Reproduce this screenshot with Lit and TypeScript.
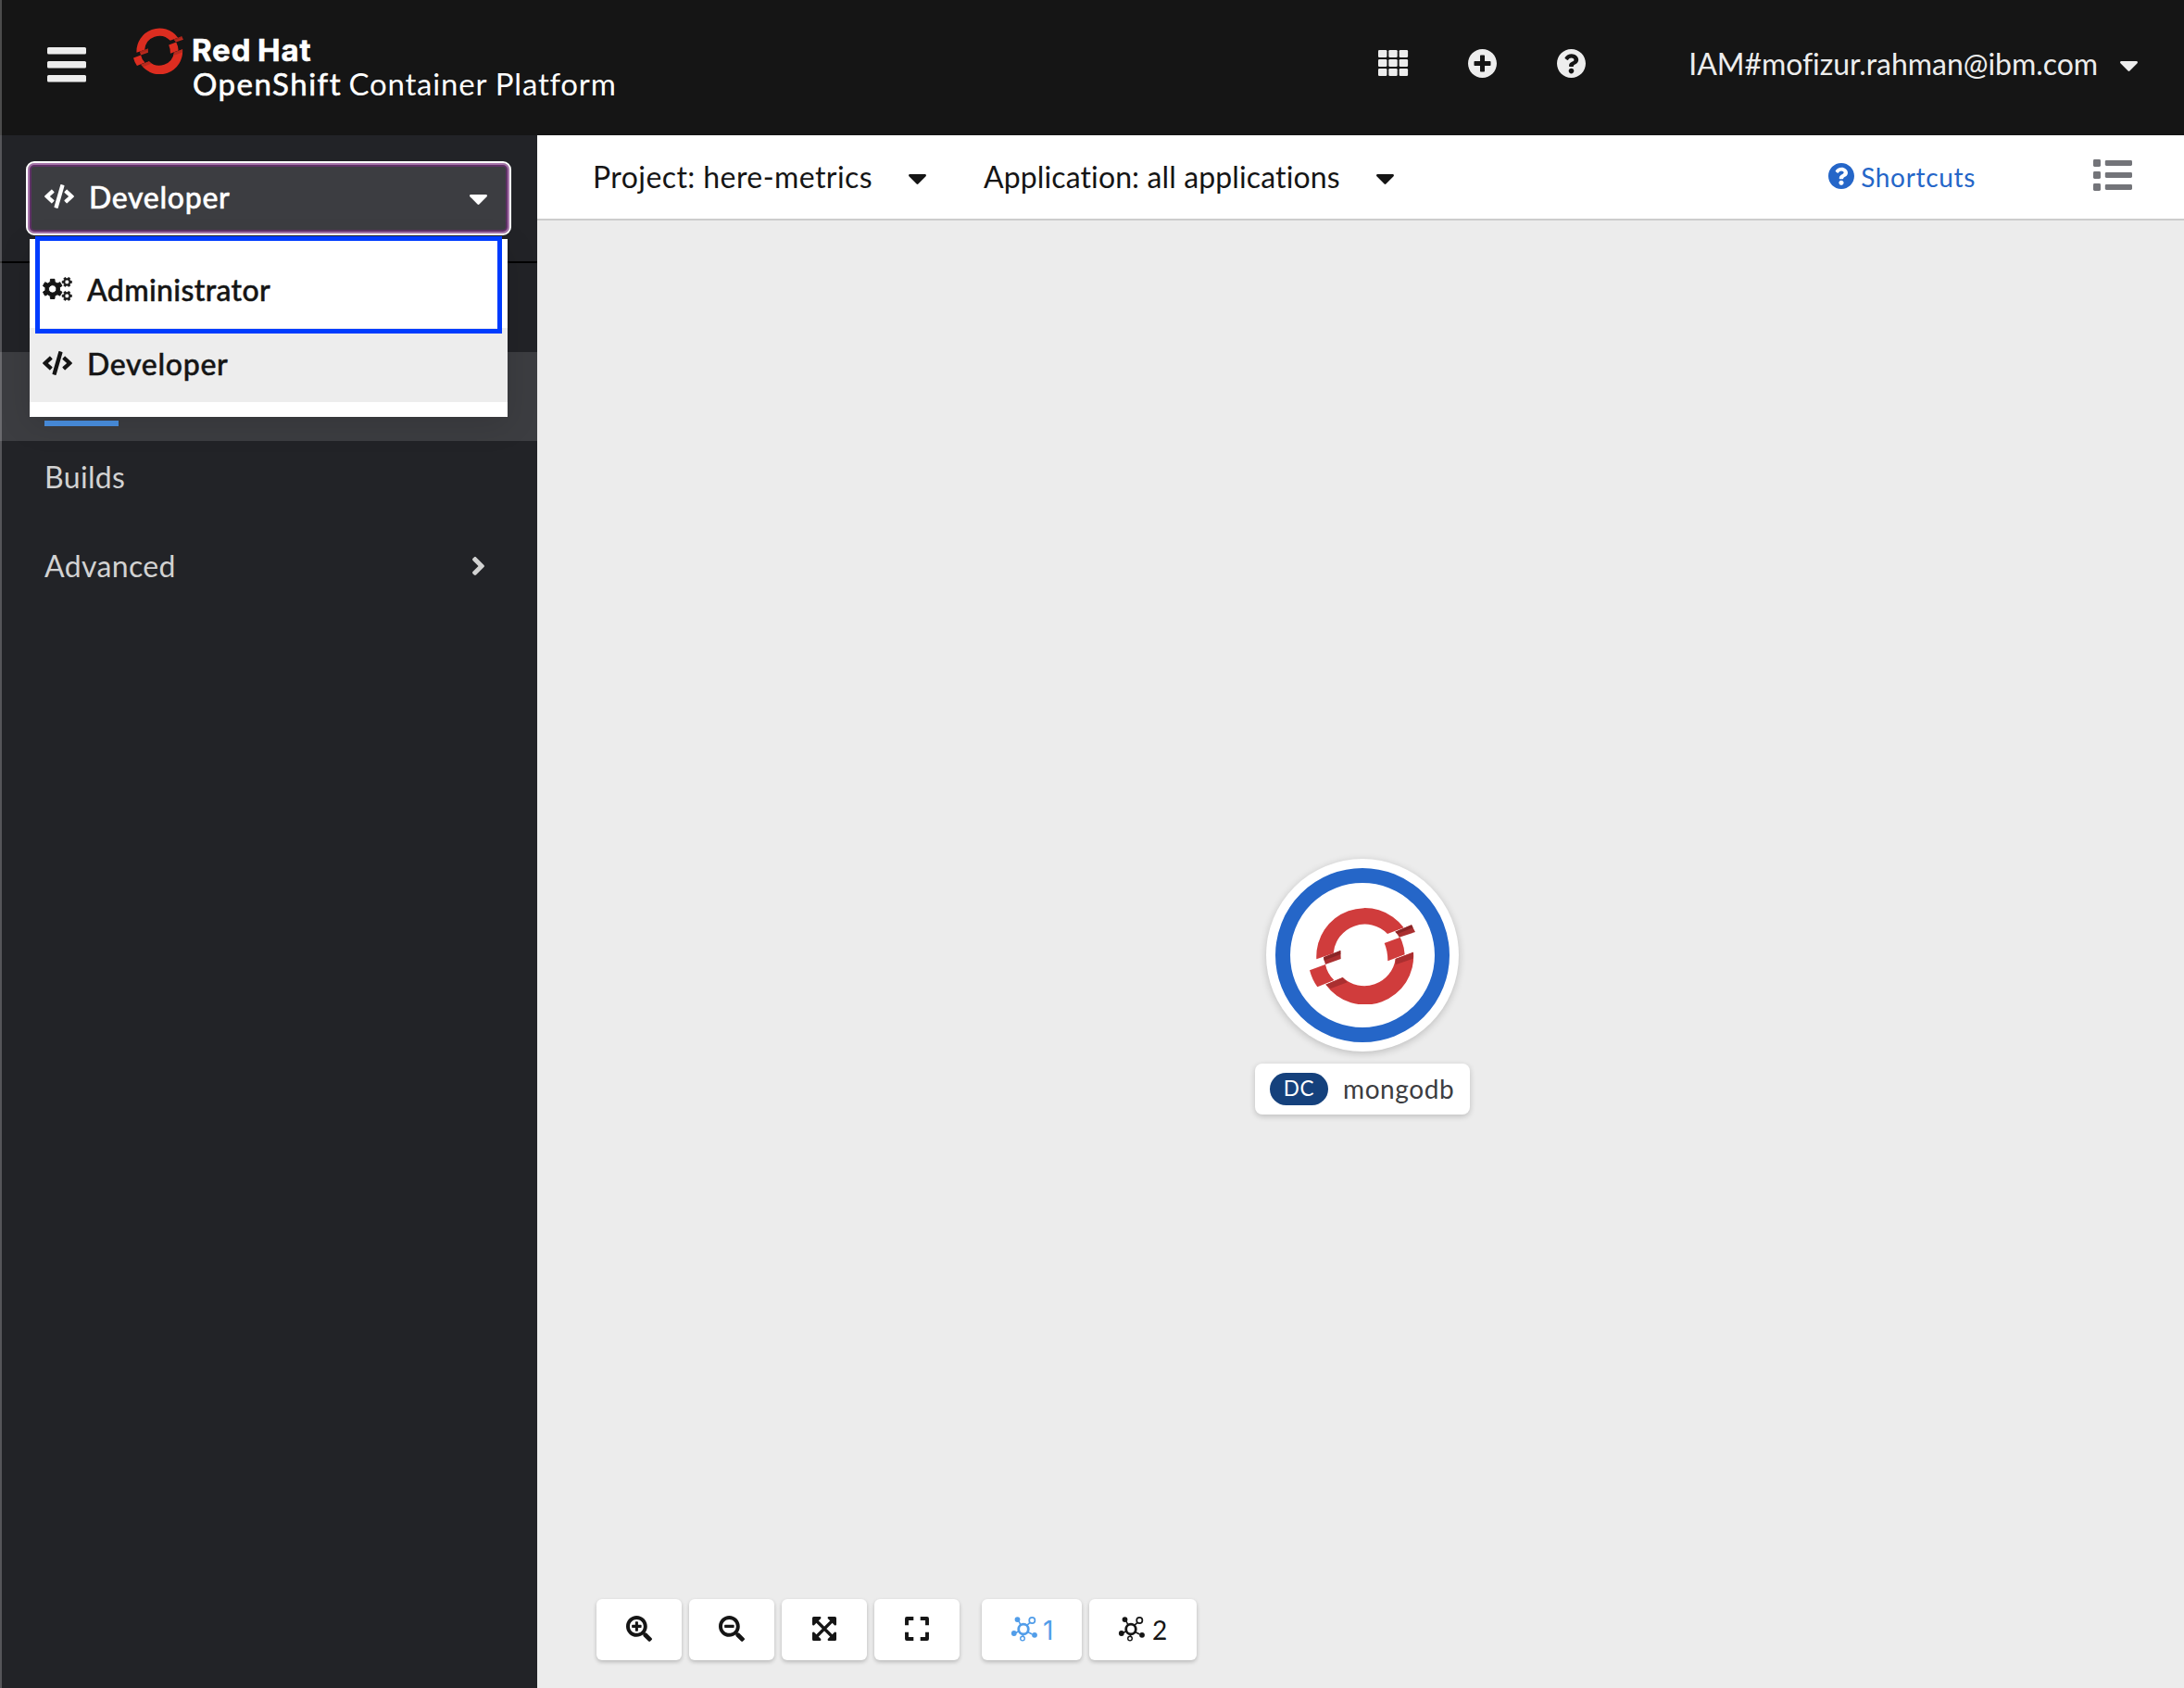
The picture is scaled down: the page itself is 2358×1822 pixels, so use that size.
import { LitElement, html, css, svg } from "lit";
import { customElement, property } from "lit/decorators.js";

/** Outline of a cog wheel: teeth spread evenly round a hub, with a round hole. */
function cog(cx: number, cy: number, outer: number, inner: number, hole: number, teeth: number, start: number) {
  const pts: string[] = [];
  const step = (Math.PI * 2) / teeth;
  for (let i = 0; i < teeth; i++) {
    const a = start + i * step;
    for (const [off, r] of [[-0.3, inner], [-0.2, outer], [0.2, outer], [0.3, inner]]) {
      const t = a + off * step;
      pts.push(`${(cx + Math.cos(t) * r).toFixed(2)} ${(cy + Math.sin(t) * r).toFixed(2)}`);
    }
  }
  return `M${pts.join("L")}Z M${cx - hole} ${cy}a${hole} ${hole} 0 1 0 ${hole * 2} 0a${hole} ${hole} 0 1 0 ${-hole * 2} 0Z`;
}

const lens = "M505 442.7 405.3 343c-4.5-4.5-10.6-7-17-7H372c27.6-35.3 44-79.7 44-128C416 93.1 322.9 0 208 0S0 93.1 0 208s93.1 208 208 208c48.3 0 92.7-16.4 128-44v16.3c0 6.4 2.5 12.5 7 17l99.7 99.7c9.4 9.4 24.6 9.4 33.9 0l28.3-28.3c9.4-9.4 9.4-24.6.1-34zM208 344c-75.2 0-136-60.8-136-136S132.8 72 208 72s136 60.8 136 136-60.8 136-136 136z";

const icons: Record<string, { box: string; art: unknown }> = {
  bars: {
    box: "0 0 42 38",
    art: svg`<rect y="0" width="42" height="7.6" rx="1.5"/><rect y="15" width="42" height="7.4" rx="1.5"/><rect y="30" width="42" height="7.6" rx="1.5"/>`,
  },
  grid: {
    box: "0 0 32 28",
    art: [0, 10, 20].map((y) => [0, 11.3, 22.7].map((x) => svg`<rect x=${x} y=${y} width="9.4" height="8" rx="1.3"/>`)),
  },
  plus: {
    box: "8 8 496 496",
    art: svg`<path d="M256 8C119 8 8 119 8 256s111 248 248 248 248-111 248-248S393 8 256 8zm144 276c0 6.6-5.4 12-12 12h-92v92c0 6.6-5.4 12-12 12h-56c-6.6 0-12-5.4-12-12v-92h-92c-6.6 0-12-5.4-12-12v-56c0-6.6 5.4-12 12-12h92v-92c0-6.6 5.4-12 12-12h56c6.6 0 12 5.4 12 12v92h92c6.6 0 12 5.4 12 12v56z"/>`,
  },
  question: {
    box: "8 8 496 496",
    art: svg`<path d="M504 256c0 136.997-111.043 248-248 248S8 392.997 8 256C8 119.083 119.043 8 256 8s248 111.083 248 248zM262.655 90c-54.497 0-89.255 22.957-116.549 63.758-3.536 5.286-2.353 12.415 2.715 16.258l34.699 26.31c5.205 3.947 12.621 3.008 16.665-2.122 17.864-22.658 30.113-35.797 57.303-35.797 20.429 0 45.698 13.148 45.698 32.958 0 14.976-12.363 22.667-32.534 33.976C247.128 238.528 216 254.941 216 296v4c0 6.627 5.373 12 12 12h56c6.627 0 12-5.373 12-12v-1.333c0-28.462 83.186-29.647 83.186-106.667 0-58.002-60.165-102-116.531-102zM256 338c-25.365 0-46 20.635-46 46 0 25.364 20.635 46 46 46s46-20.636 46-46c0-25.365-20.635-46-46-46z"/>`,
  },
  caret: {
    box: "11 192 298 169",
    art: svg`<path d="M31.3 192h257.3c17.8 0 26.7 21.5 14.1 34.1L174.1 354.7c-7.8 7.8-20.5 7.8-28.3 0L17.2 226.1C4.6 213.5 13.5 192 31.3 192z"/>`,
  },
  angle: {
    box: "24 96 208 320",
    art: svg`<path d="M224.3 273l-136 136c-9.4 9.4-24.6 9.4-33.9 0l-22.6-22.6c-9.4-9.4-9.4-24.6 0-33.9l96.4-96.4-96.4-96.4c-9.4-9.4-9.4-24.6 0-33.9L54.3 103c9.4-9.4 24.6-9.4 33.9 0l136 136c9.5 9.4 9.5 24.6.1 34z"/>`,
  },
  code: {
    box: "0 0 640 512",
    art: svg`<path d="M278.9 511.5l-61-17.7c-6.4-1.8-10-8.5-8.2-14.9L346.2 8.7c1.8-6.4 8.5-10 14.9-8.2l61 17.7c6.4 1.8 10 8.5 8.2 14.9L293.8 503.3c-1.9 6.4-8.5 10.1-14.9 8.2zm-114-112.2l43.5-46.4c4.6-4.9 4.3-12.7-.8-17.2L117 256l90.6-79.7c5.1-4.5 5.5-12.3.8-17.2l-43.5-46.4c-4.5-4.8-12.1-5.1-17-.5L3.8 247.2c-5.1 4.7-5.1 12.8 0 17.5l144.1 135.1c4.9 4.6 12.5 4.4 17-.5zm327.2.6l144.1-135.1c5.1-4.7 5.1-12.8 0-17.5L492.1 112.1c-4.8-4.5-12.4-4.3-17 .5L431.6 159c-4.6 4.9-4.3 12.7.8 17.2L523 256l-90.6 79.7c-5.1 4.5-5.5 12.3-.8 17.2l43.5 46.4c4.5 4.9 12.1 5.1 17 .6z"/>`,
  },
  cogs: {
    box: "0 0 32 26",
    art: svg`<path fill-rule="evenodd" stroke="currentColor" stroke-width="1" stroke-linejoin="round" d=${cog(10.7, 12.9, 10.8, 7.9, 4.2, 6, Math.PI / 2)}/><path fill-rule="evenodd" stroke="currentColor" stroke-width=".6" stroke-linejoin="round" d=${cog(26.3, 5.4, 5.3, 3.9, 2.3, 6, 0) + cog(26.3, 20.4, 5.3, 3.9, 2.3, 6, 0)}/>`,
  },
  list: {
    box: "0 0 42 34",
    art: [0, 13, 26].map((y) => svg`<rect y=${y} width="8" height="8" rx="1.4"/><rect x="12.8" y=${y + 1} width="29.2" height="6" rx="1.4"/>`),
  },
  zoomIn: {
    box: "0 0 512 512",
    art: svg`<path d=${lens}/><path d="M304 192v32c0 6.600-5.400 12-12 12h-56v56c0 6.600-5.400 12-12 12h-32c-6.600 0-12-5.400-12-12v-56h-56c-6.600 0-12-5.400-12-12v-32c0-6.600 5.400-12 12-12h56v-56c0-6.600 5.400-12 12-12h32c6.600 0 12 5.400 12 12v56h56c6.600 0 12 5.400 12 12z"/>`,
  },
  zoomOut: {
    box: "0 0 512 512",
    art: svg`<path d=${lens}/><rect x="112" y="180" width="192" height="56" rx="12"/>`,
  },
  fit: {
    box: "0 0 26 26",
    art: svg`<path stroke="currentColor" stroke-width="3.2" d="M4 4 22 22M22 4 4 22"/><path d="M1.500 0H8.600Q10 .6 9.200 2L2 9.200Q.6 10 0 8.600V1.500Q0 0 1.500 0ZM24.500 0H17.400Q16 .6 16.800 2L24 9.200Q25.400 10 26 8.600V1.500Q26 0 24.500 0ZM1.500 26H8.600Q10 25.400 9.200 24L2 16.800Q.6 16 0 17.400V24.500Q0 26 1.500 26ZM24.500 26H17.400Q16 25.400 16.800 24L24 16.800Q25.400 16 26 17.400V24.500Q26 26 24.500 26Z"/>`,
  },
  expand: {
    box: "0 0 26 26",
    art: svg`<path fill="none" stroke="currentColor" stroke-width="3.900" stroke-linejoin="round" d="M2 9.300V2H9.300M16.700 2H24V9.300M24 16.700V24H16.700M9.300 24H2V16.700"/>`,
  },
  topology: {
    box: "0 0 28 28",
    art: svg`<g fill="none" stroke="currentColor"><circle cx="13" cy="14.500" r="5.300" stroke-width="2.800"/><circle cx="22.300" cy="5" r="3.100" stroke-width="1.700"/><circle cx="12" cy="24.600" r="2.300" stroke-width="1.400"/><path stroke-width="1.600" d="M8 6 10 10M20 7.400 16.500 10.700M4.500 18.500 8 16.700M12.500 20.500V22.500M17 17.200 22.500 20"/></g><circle cx="6.500" cy="4.100" r="2.900"/><circle cx="2.800" cy="19" r="2.900"/><circle cx="25" cy="20.800" r="2.900"/>`,
  },
};

@customElement("ui-icon")
class UiIcon extends LitElement {
  @property() name = "";
  static styles = css`
    :host { display: block; flex: none; }
    .art { display: block; width: 100%; height: 100%; fill: currentColor; overflow: visible; }
  `;
  render() {
    const icon = icons[this.name];
    return html`<svg class="art" viewBox=${icon.box} preserveAspectRatio="none">${icon.art}</svg>`;
  }
}

@customElement("openshift-mark")
class OpenshiftMark extends LitElement {
  static styles = css`
    :host { display: block; flex: none; }
    .art { display: block; width: 100%; height: 100%; }
    .band { fill: var(--band, #d03c3c); }
    .fold { fill: var(--fold, #aa2f30); }
    .deep { fill: var(--deep, #8a2526); }
  `;
  render() {
    return html`<svg class="art" viewBox="221 206 342 315" preserveAspectRatio="none">
      <path class="band" d="M243 375A157 157 0 0 1 526 273L473 293A102 102 0 0 0 298 356Z" />
      <path class="band" d="M273 457A157 157 0 0 0 557 352L499 374A102 102 0 0 1 328 434Z" />
      <path class="band" d="M221 411 272 392Q278 422 300 443L246 465Q229 442 221 411Z" />
      <path class="band" d="M463 323 514 304Q527 330 529 360L474 381Q474 348 463 323Z" />
      <path class="fold" d="M266 369 321 347 322 374 272 392Q268 380 266 369Z" />
      <path class="deep" d="M266 369 321 347V359L268 379Z" />
      <path class="fold" d="M498 286 551 264 563 287 511 304Q506 294 498 286Z" />
      <path class="deep" d="M498 286 551 264 556 273 506 293Z" />
      <path class="fold" d="M499 374 557 352 556 373 499 393Z" />
      <path class="fold" d="M273 457 328 434 343 450 289 470Z" />
    </svg>`;
  }
}

@customElement("app-root")
class AppRoot extends LitElement {
  static styles = css`
    :host {
      display: flex; flex-direction: column; position: relative; box-sizing: border-box;
      width: 2358px; height: 1822px; overflow: hidden;
      font: 400 32px/48px Lato, "Liberation Sans", sans-serif; color: #151515; background: #ececec;
    }
    .edge { position: absolute; left: 0; top: 0; width: 2px; height: 100%; background: rgba(255, 255, 255, 0.23); }
    .masthead { flex: none; height: 146px; box-sizing: border-box; display: flex; padding-right: 50px; background: #151515; color: #ededed; }
    .burger { width: 42px; height: 38px; margin: 51px 51px 0 51px; }
    .brand-mark { width: 54px; height: 50px; margin-top: 30px; --band: #dc2d20; --fold: #b82a1d; --deep: #a5241a; }
    .brand-text { margin: 37px 0 0 10px; color: #fff; font-size: 33px; line-height: 35.5px; white-space: nowrap; }
    .brand-name { font-family: Inter, sans-serif; font-weight: 700; letter-spacing: 0.85px; word-spacing: -2px; -webkit-text-stroke: 0.5px currentColor; margin-left: -1px; }
    .brand-product { letter-spacing: 1.5px; -webkit-text-stroke: 0.6px currentColor; }
    .brand-rest { letter-spacing: 0.8px; margin-left: -1px; }
    .tools { margin-left: auto; display: flex; }
    .tool { width: 31px; height: 31px; margin: 52.500px 65px 0 0; }
    .tool-grid { width: 32px; height: 28px; margin: 54px 65px 0 0; }
    .user { display: flex; margin: 45px 0 0 46px; white-space: nowrap; letter-spacing: -0.05px; }
    .caret { width: 19px; height: 11px; }
    .user-caret { margin: 21px 0 0 24px; }
    .body { flex: 1; display: flex; min-height: 0; }
    .sidebar { flex: none; width: 580px; background: #222327; color: #d2d2d2; position: relative; }
    .switcher { height: 136px; box-sizing: border-box; padding: 28px 28px 0; }
    .toggle {
      height: 80px; box-sizing: border-box; display: flex; border: 2px solid #fff; border-radius: 9px;
      padding: 12px 24px 0 18px; background: #3c3d41; color: #fff; font-weight: 500;
      box-shadow: inset 0 0 0 2px #a674a9, inset 0 0 0 4px #5f3166;
    }
    .row-icon { width: 32px; height: 26px; }
    .toggle-icon { margin-top: 11px; }
    .toggle-label { margin: 1px 0 0 16px; letter-spacing: 0.68px; -webkit-text-stroke: 0.5px currentColor; }
    .toggle-caret { margin: 22px 0 0 auto; }
    .rule { height: 2px; background: #030303; }
    .nav-item { height: 96px; box-sizing: border-box; padding: 15px 57px 0 48px; display: flex; }
    .nav-current { background: #3c3d41; padding-top: 74px; }
    .underline { width: 80px; height: 6px; background: #4a90e2; }
    .wide { letter-spacing: 0.35px; }
    .chevron { width: 13px; height: 20px; margin: 14px 0 0 auto; }
    .menu {
      position: absolute; left: 32px; top: 112px; width: 516px; height: 192px; box-sizing: border-box;
      padding: 16px 0; background: #fff; color: #151515; font-weight: 500; box-shadow: 0 8px 32px rgba(3, 3, 3, 0.12);
    }
    .option { height: 80px; box-sizing: border-box; padding: 14px 14px 0; display: flex; }
    .option-current { background: #ededed; }
    .option-icon { margin-top: 11px; }
    .option-label { margin: 1px 0 0 16px; letter-spacing: 0.35px; -webkit-text-stroke: 0.5px currentColor; }
    .option-current .option-label { letter-spacing: 0.68px; }
    .callout { position: absolute; left: 38px; top: 109px; width: 504px; height: 105px; box-sizing: border-box; border: 5px solid #003cff; }
    .main { flex: 1; display: flex; flex-direction: column; }
    .toolbar { flex: none; height: 92px; box-sizing: border-box; border-bottom: 2px solid #ccc; background: #fff; display: flex; padding: 21px 56px 0 60px; white-space: nowrap; }
    .project { letter-spacing: 0.42px; }
    .application { margin-left: 62px; letter-spacing: 0.12px; }
    .filter-caret { margin: 21px 0 0 39px; }
    .shortcuts { margin-left: auto; display: flex; color: #2566c8; font-size: 28px; letter-spacing: 0.67px; }
    .help { width: 28px; height: 28px; margin: 9px 7px 0 0; }
    .list { width: 42px; height: 34px; margin: 5px 0 0 127px; color: #737479; }
    .canvas { flex: 1; position: relative; display: flex; flex-direction: column; justify-content: flex-end; background: #ececec; }
    .node { position: absolute; left: 775px; top: 689px; width: 232px; display: flex; flex-direction: column; align-items: center; }
    .disc { width: 208px; height: 208px; box-sizing: border-box; padding: 10px; border-radius: 50%; background: #fff; box-shadow: 0 2px 8px rgba(3, 3, 3, 0.2); }
    .ring { height: 188px; box-sizing: border-box; border: 16px solid #2566c8; border-radius: 50%; padding: 26px 0 0 21px; }
    .node-mark { width: 114px; height: 105px; }
    .label { margin-top: 13px; width: 232px; height: 55px; box-sizing: border-box; display: flex; padding: 10px 16px 0; border-radius: 8px; background: #fff; box-shadow: 0 2px 6px rgba(3, 3, 3, 0.2); line-height: 34px; color: #3c3d41; }
    .pill { width: 63px; height: 35px; border-radius: 18px; background: #15417c; color: #fff; font-size: 22.500px; line-height: 34px; text-align: center; letter-spacing: 0.6px; }
    .label-name { margin-left: 16px; font-size: 28px; letter-spacing: 0.6px; }
    .controls { display: flex; gap: 8px; padding: 0 0 30px 64px; }
    .control { width: 92px; height: 66px; box-sizing: border-box; display: flex; border-radius: 6px; background: #fff; box-shadow: 0 2px 4px rgba(3, 3, 3, 0.22); font: 28px/36px Inter, sans-serif; padding: 14px 0 0 32px; }
    .glyph { width: 28px; height: 28px; margin-top: 4px; }
    .glyph-small { width: 26px; height: 26px; margin: 5px 0 0 1px; }
    .layout-first { width: 108px; margin-left: 16px; color: #519de9; }
    .layout-second { width: 116px; font-family: Lato, sans-serif; }
    .layout-number { margin: 2px 0 0 6px; }
    .layout-second .layout-number { margin: 1px 0 0 8px; }
  `;

  render() {
    return html`
      <header class="masthead">
        <ui-icon class="burger" name="bars"></ui-icon>
        <openshift-mark class="brand-mark"></openshift-mark>
        <div class="brand-text">
          <div class="brand-name">Red Hat</div>
          <div><span class="brand-product">OpenShift</span> <span class="brand-rest">Container Platform</span></div>
        </div>
        <div class="tools">
          <ui-icon class="tool-grid" name="grid"></ui-icon>
          <ui-icon class="tool" name="plus"></ui-icon>
          <ui-icon class="tool" name="question"></ui-icon>
          <div class="user">IAM#mofizur.rahman@ibm.com<ui-icon class="caret user-caret" name="caret"></ui-icon></div>
        </div>
      </header>
      <div class="body">
        <nav class="sidebar">
          <div class="switcher">
            <div class="toggle">
              <ui-icon class="row-icon toggle-icon" name="code"></ui-icon>
              <span class="toggle-label">Developer</span>
              <ui-icon class="caret toggle-caret" name="caret"></ui-icon>
            </div>
          </div>
          <div class="rule"></div>
          <div class="nav-item"></div>
          <div class="nav-item nav-current"><div class="underline"></div></div>
          <div class="nav-item wide">Builds</div>
          <div class="nav-item wide">Advanced<ui-icon class="chevron" name="angle"></ui-icon></div>
          <div class="menu">
            <div class="option">
              <ui-icon class="row-icon option-icon" name="cogs"></ui-icon>
              <span class="option-label">Administrator</span>
            </div>
            <div class="option option-current">
              <ui-icon class="row-icon option-icon" name="code"></ui-icon>
              <span class="option-label">Developer</span>
            </div>
          </div>
          <div class="callout"></div>
        </nav>
        <main class="main">
          <div class="toolbar">
            <span class="project">Project: here-metrics</span>
            <ui-icon class="caret filter-caret" name="caret"></ui-icon>
            <span class="application">Application: all applications</span>
            <ui-icon class="caret filter-caret" name="caret"></ui-icon>
            <div class="shortcuts"><ui-icon class="help" name="question"></ui-icon>Shortcuts</div>
            <ui-icon class="list" name="list"></ui-icon>
          </div>
          <div class="canvas">
            <div class="node">
              <div class="disc"><div class="ring"><openshift-mark class="node-mark"></openshift-mark></div></div>
              <div class="label"><span class="pill">DC</span><span class="label-name">mongodb</span></div>
            </div>
            <div class="controls">
              <div class="control"><ui-icon class="glyph" name="zoomIn"></ui-icon></div>
              <div class="control"><ui-icon class="glyph" name="zoomOut"></ui-icon></div>
              <div class="control"><ui-icon class="glyph-small" name="fit"></ui-icon></div>
              <div class="control"><ui-icon class="glyph-small" name="expand"></ui-icon></div>
              <div class="control layout-first"><ui-icon class="glyph" name="topology"></ui-icon><span class="layout-number">1</span></div>
              <div class="control layout-second"><ui-icon class="glyph" name="topology"></ui-icon><span class="layout-number">2</span></div>
            </div>
          </div>
        </main>
      </div>
      <div class="edge"></div>
    `;
  }
}
